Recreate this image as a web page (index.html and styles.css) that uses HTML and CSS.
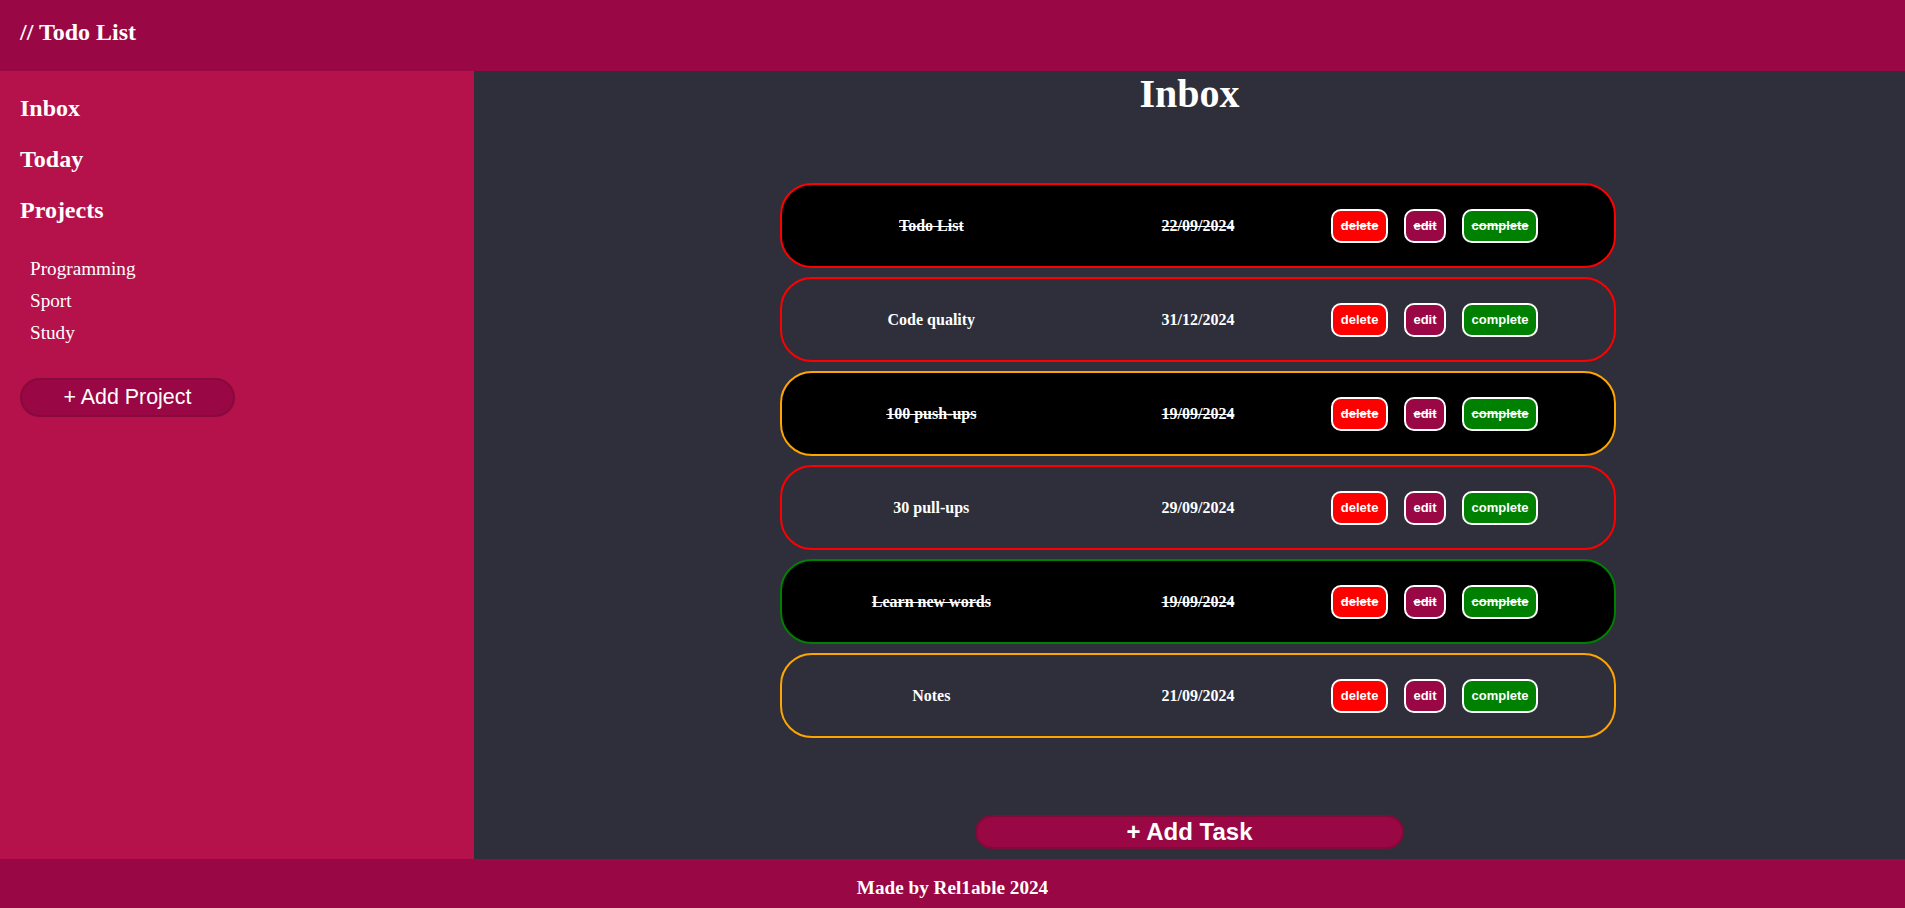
FILE: index.html
```html
<!DOCTYPE html>
<html lang="en">
<head>
<meta charset="utf-8">
<title>Todo List</title>
<link rel="stylesheet" href="styles.css">
</head>
<body>
<div class="app">
  <header class="topbar">
    <h1 class="brand">// Todo List</h1>
  </header>
  <aside class="sidebar">
    <nav class="nav">
      <div class="nav-item">Inbox</div>
      <div class="nav-item">Today</div>
      <div class="nav-item">Projects</div>
    </nav>
    <ul class="projects">
      <li>Programming</li>
      <li>Sport</li>
      <li>Study</li>
    </ul>
    <button class="add-project">+ Add Project</button>
  </aside>
  <main class="main">
    <h2 class="page-title">Inbox</h2>
    <div class="tasks">
      <div class="task done red">
        <span class="task-title">Todo List</span>
        <span class="task-date">22/09/2024</span>
        <div class="actions"><button class="btn del">delete</button><button class="btn edit">edit</button><button class="btn comp">complete</button></div>
      </div>
      <div class="task red">
        <span class="task-title">Code quality</span>
        <span class="task-date">31/12/2024</span>
        <div class="actions"><button class="btn del">delete</button><button class="btn edit">edit</button><button class="btn comp">complete</button></div>
      </div>
      <div class="task done orange">
        <span class="task-title">100 push-ups</span>
        <span class="task-date">19/09/2024</span>
        <div class="actions"><button class="btn del">delete</button><button class="btn edit">edit</button><button class="btn comp">complete</button></div>
      </div>
      <div class="task red">
        <span class="task-title">30 pull-ups</span>
        <span class="task-date">29/09/2024</span>
        <div class="actions"><button class="btn del">delete</button><button class="btn edit">edit</button><button class="btn comp">complete</button></div>
      </div>
      <div class="task done green">
        <span class="task-title">Learn new words</span>
        <span class="task-date">19/09/2024</span>
        <div class="actions"><button class="btn del">delete</button><button class="btn edit">edit</button><button class="btn comp">complete</button></div>
      </div>
      <div class="task orange">
        <span class="task-title">Notes</span>
        <span class="task-date">21/09/2024</span>
        <div class="actions"><button class="btn del">delete</button><button class="btn edit">edit</button><button class="btn comp">complete</button></div>
      </div>
    </div>
    <button class="add-task">+ Add Task</button>
  </main>
  <footer class="footer">Made by Rel1able 2024</footer>
</div>
</body>
</html>
```

FILE: styles.css
```css
* { box-sizing: border-box; }
html, body { margin: 0; padding: 0; height: 100%; }
body {
  font-family: "Liberation Serif", "Times New Roman", serif;
  color: #ffffff;
  background: #2e2f3b;
}
.app {
  display: grid;
  grid-template-columns: 474px 1fr;
  grid-template-rows: 71px 1fr 49px;
  height: 100vh;
}
.topbar {
  grid-column: 1 / 3;
  background: #990744;
  padding: 19px 20px 0;
}
.brand {
  margin: 0;
  font-size: 24px;
  font-weight: bold;
  line-height: 27.6px;
}
.sidebar {
  background: #b5114a;
  padding: 24px 20px 0;
  display: flex;
  flex-direction: column;
  align-items: flex-start;
}
.nav { display: flex; flex-direction: column; gap: 23.4px; }
.nav-item {
  font-size: 24px;
  font-weight: bold;
  line-height: 27.6px;
}
.projects {
  list-style: none;
  margin: 28.5px 0 0;
  padding: 0 0 0 10px;
}
.projects li {
  font-size: 19.2px;
  line-height: 32px;
}
.add-project {
  margin-top: 28.5px;
  width: 215px;
  height: 39px;
  border-radius: 20px;
  background: #990744;
  border: 2px solid #870a3d;
  color: #ffffff;
  font-family: "Liberation Sans", Arial, sans-serif;
  font-size: 21.4px;
  padding: 0;
}
.main {
  display: flex;
  flex-direction: column;
  align-items: center;
}
.page-title {
  margin: 0;
  font-size: 40px;
  font-weight: bold;
  line-height: 46px;
}
.tasks {
  margin-top: 66px;
  width: 853px;
  padding-left: 17px;
  display: flex;
  flex-direction: column;
  gap: 9px;
}
.task {
  height: 85px;
  border: 2px solid #ff0000;
  border-radius: 32px;
  display: grid;
  grid-template-columns: 1fr 1fr 1fr;
  align-items: center;
  padding: 0 16px;
  font-size: 16px;
  font-weight: bold;
}
.task.red { border-color: #ff0000; }
.task.orange { border-color: #ffa500; }
.task.green { border-color: #008000; }
.task.done { background: #000000; }
.task-title, .task-date { text-align: center; }
.task.done .task-title,
.task.done .task-date,
.task.done .btn { text-decoration: line-through; }
.actions { display: flex; gap: 16px; }
.btn {
  height: 34px;
  padding: 0 7.5px;
  border: 2px solid #ffffff;
  border-radius: 10px;
  color: #ffffff;
  font-family: "Liberation Sans", Arial, sans-serif;
  font-size: 13px;
  font-weight: bold;
}
.btn.del { background: #ff0000; }
.btn.edit { background: #990744; }
.btn.comp { background: #008000; }
.add-task {
  margin-top: auto;
  margin-bottom: 10px;
  width: 30%;
  height: 34px;
  border-radius: 17px;
  background: #990744;
  border: 2px solid #7e0b38;
  color: #ffffff;
  font-family: "Liberation Sans", Arial, sans-serif;
  font-size: 24px;
  font-weight: bold;
  padding: 0;
}
.footer {
  grid-column: 1 / 3;
  background: #990744;
  text-align: center;
  font-size: 19.2px;
  font-weight: bold;
  line-height: 22px;
  padding-top: 18px;
}
```
